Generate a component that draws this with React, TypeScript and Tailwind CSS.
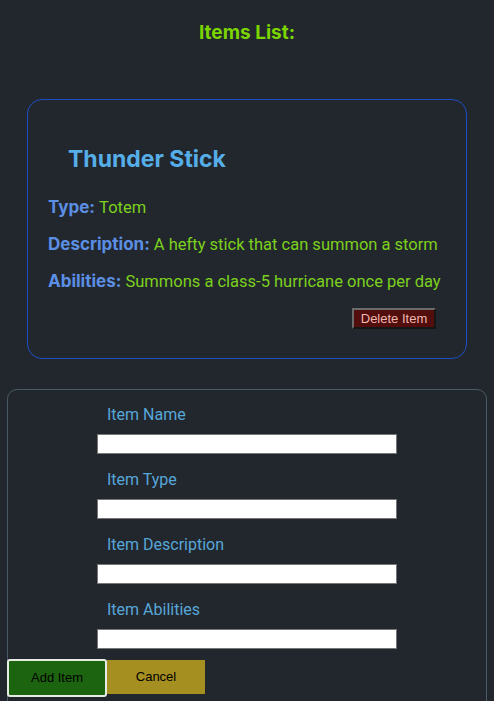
import React from "react";

const fields = ["Item Name", "Item Type", "Item Description", "Item Abilities"];

const rows = [
  ["Type:", "Totem"],
  ["Description:", "A hefty stick that can summon a storm"],
  ["Abilities:", "Summons a class-5 hurricane once per day"],
];

export default function App() {
  return (
    <div className="min-h-[701px] w-full bg-[#22272e] overflow-hidden" style={{ fontFamily: "Inter, 'Noto Sans', sans-serif" }}>
      <h1 className="pt-[22px] text-center text-[19px] leading-[22px] font-bold text-[#7cd400]">Items List:</h1>

      <div className="mx-[27px] mt-[55px] rounded-[15px] border border-[#1d4fc4] pl-[20px] pr-[30px] pt-[46px] pb-[29px]">
        <h2 className="pl-[20px] text-[23px] leading-[27px] font-bold text-[#56aee8]">Thunder Stick</h2>
        <div className="mt-[24px] flex flex-col gap-[16px] text-[16.5px] leading-[21px]">
          {rows.map(([l, v]) => (
            <p key={l} className="whitespace-nowrap">
              <span className="font-bold text-[17px] text-[#5b8fe4]">{l} </span>
              <span className="text-[#7cd11c]" style={{ fontFamily: "Roboto, sans-serif" }}>{v}</span>
            </p>
          ))}
        </div>
        <div className="mt-[16px] flex justify-end">
          <button
            className="h-[21px] w-[84px] border-2 border-[#6b6b6b] bg-[#520d0d] text-[13px] leading-[17px] text-[#f0b8b0]"
            style={{ fontFamily: "'Liberation Sans', Arial, sans-serif", borderStyle: "outset" }}
          >
            Delete Item
          </button>
        </div>
      </div>

      <div className="mx-[7px] mt-[30px] h-[330px] rounded-[10px] border border-[#485a63] pt-[15px]">
        <div className="flex flex-col gap-[16px]">
          {fields.map((f) => (
            <div key={f} className="flex flex-col">
              <label className="pl-[99px] text-[16px] leading-[20px] text-[#57a6d8]" style={{ fontFamily: "Roboto, sans-serif" }}>{f}</label>
              <input className="ml-[89px] mt-[9px] h-[20px] w-[300px] border border-[#767676] bg-white" />
            </div>
          ))}
        </div>
        <div className="-ml-[1px] mt-[10px] flex items-start" style={{ fontFamily: "'Liberation Sans', Arial, sans-serif" }}>
          <button className="h-[38px] w-[100px] rounded-[3px] border-2 border-[#e6ece4] bg-[#1d6410] text-[13px] text-black">Add Item</button>
          <button className="mt-[1px] h-[34px] w-[98px] bg-[#a68f21] text-[13px] text-black">Cancel</button>
        </div>
      </div>
    </div>
  );
}
